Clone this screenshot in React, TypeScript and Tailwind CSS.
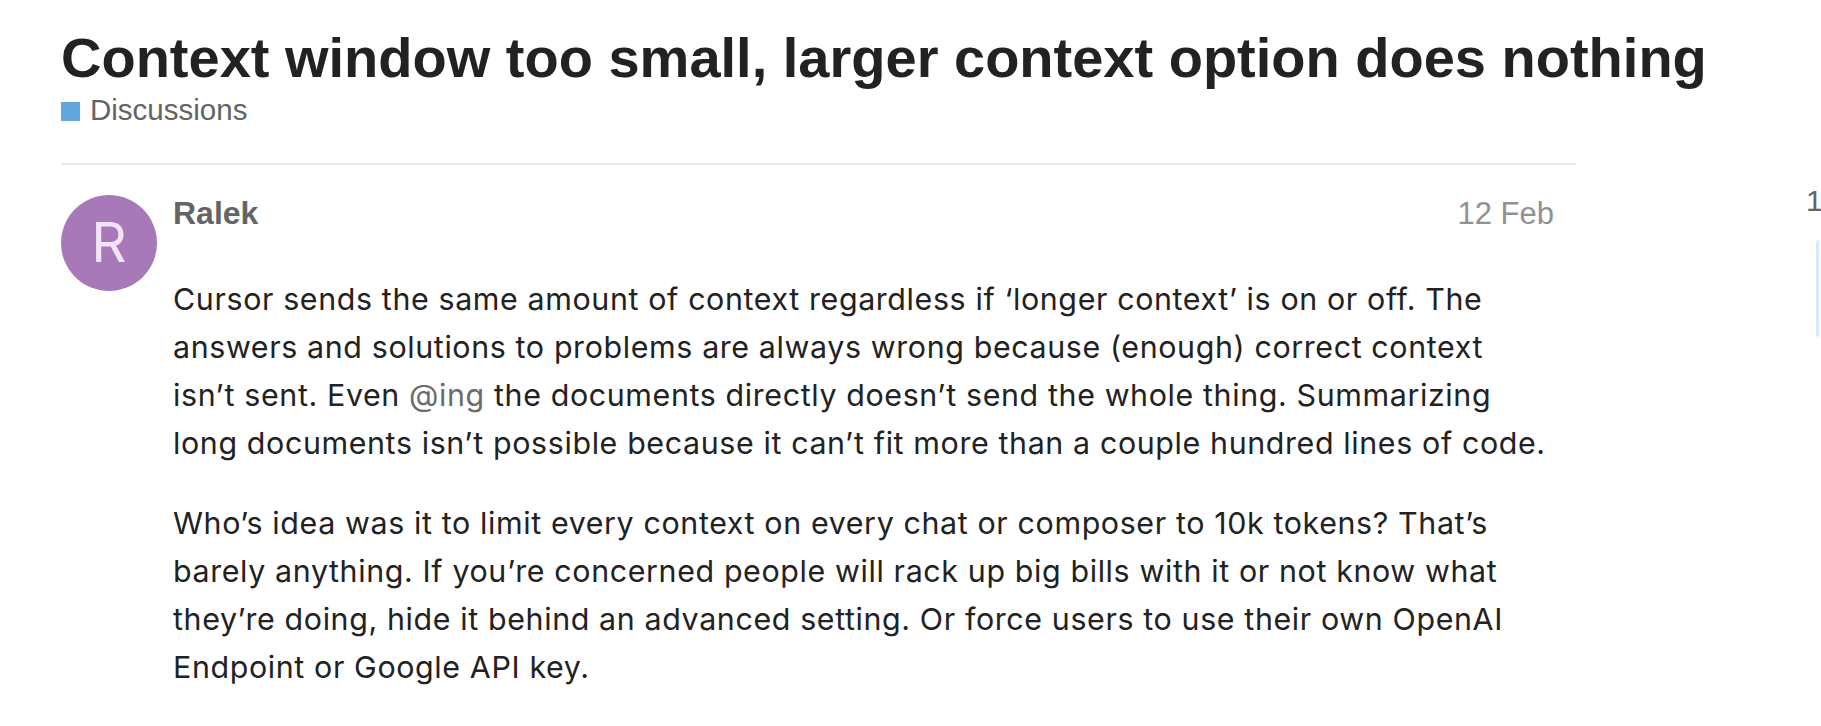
import React from "react";

export default function App() {
  return (
    <div className="w-full h-[726px] overflow-hidden bg-white flex pl-[61px]">
      <div className="w-[1515px] shrink-0 flex flex-col">
        <h1
          className="pt-[24px] text-[56px] leading-[1.2] font-bold text-[#222222] whitespace-nowrap"
          style={{ fontFamily: '"Liberation Sans", Arial, sans-serif' }}
        >
          Context window too small, larger context option does nothing
        </h1>
        <div
          className="mt-[1px] flex items-end text-[29.5px] leading-[1.2] text-[#646464]"
          style={{ fontFamily: '"Liberation Sans", Arial, sans-serif' }}
        >
          <span className="w-[19px] h-[19px] bg-[#62a8df] mb-[7px] mr-[10px] shrink-0" />
          <span>Discussions</span>
        </div>
        <div className="mt-[35px] h-[2px] bg-[#e9e9e9]" />
        <div className="flex mt-[30px]">
          <div
            className="w-[96px] h-[96px] rounded-full bg-[#a879b8] flex items-center justify-center shrink-0 text-[55px] text-[#f3e3f6] leading-none"
            style={{ fontFamily: 'Inter, "Noto Sans", sans-serif' }}
          >
            R
          </div>
          <div className="ml-[16px] w-[1383px] flex flex-col">
            <div
              className="flex justify-between items-baseline -mt-[1px]"
              style={{ fontFamily: '"Liberation Sans", Arial, sans-serif' }}
            >
              <span className="text-[32px] leading-[1.2] font-bold text-[#646464]">Ralek</span>
              <span className="text-[31px] leading-[1.2] text-[#919191] mr-[2px]">12 Feb</span>
            </div>
            <div
              className="mt-[43px] text-[30.4px] leading-[48px] tracking-[0.62px] text-[#222222] whitespace-nowrap"
              style={{ fontFamily: 'Inter, "Noto Sans", sans-serif' }}
            >
              <p>
                Cursor sends the same amount of context regardless if ‘longer context’ is on or off. The
                <br />
                answers and solutions to problems are always wrong because (enough) correct context
                <br />
                isn’t sent. Even <span className="text-[#6b6b6b]">@ing</span> the documents directly
                doesn’t send the whole thing. Summarizing
                <br />
                long documents isn’t possible because it can’t fit more than a couple hundred lines of code.
              </p>
              <p className="mt-[32px]">
                Who’s idea was it to limit every context on every chat or composer to 10k tokens? That’s
                <br />
                barely anything. If you’re concerned people will rack up big bills with it or not know what
                <br />
                they’re doing, hide it behind an advanced setting. Or force users to use their own OpenAI
                <br />
                Endpoint or Google API key.
              </p>
            </div>
          </div>
        </div>
      </div>
      <div className="ml-[230px] shrink-0 flex flex-col">
        <span
          className="mt-[183px] text-[30px] leading-[1.2] text-[#646464] whitespace-nowrap"
          style={{ fontFamily: '"Liberation Sans", Arial, sans-serif' }}
        >
          1
        </span>
        <div className="mt-[21px] ml-[10px] w-[3px] h-[97px] bg-[#d4e9fa] rounded-l-full" />
      </div>
    </div>
  );
}
